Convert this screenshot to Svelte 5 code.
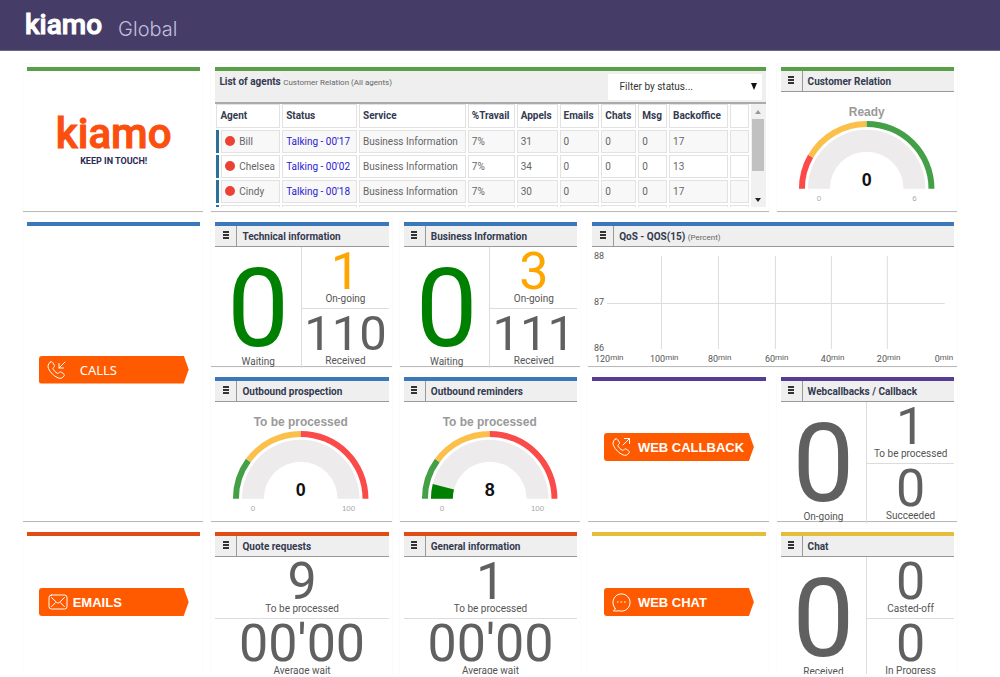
<script>
  const agents = [
    { name: 'Bill', status: "Talking - 00'17", calls: 31, back: 17 },
    { name: 'Chelsea', status: "Talking - 00'02", calls: 34, back: 13 },
    { name: 'Cindy', status: "Talking - 00'18", calls: 30, back: 17 }
  ];
  const columns = ['Status', 'Service', '%Travail', 'Appels', 'Emails', 'Chats', 'Msg', 'Backoffice', ''];

  const GREEN = '#43a047', YELLOW = '#fbc04a', RED = '#fb4a4a';
  const CX = 86, CY = 97;

  // Ring segment between two fractions of the half circle
  function arc(from, to, outer, inner) {
    const p = (f, r) => {
      const a = Math.PI * (1 - f);
      return `${(CX + r * Math.cos(a)).toFixed(2)} ${(CY - r * Math.sin(a)).toFixed(2)}`;
    };
    return `M${p(from, outer)}A${outer} ${outer} 0 0 1 ${p(to, outer)}L${p(to, inner)}A${inner} ${inner} 0 0 0 ${p(from, inner)}Z`;
  }

  const vlines = [69, 126, 183, 239, 295];
  const ticks = [[3, 120], [58, 100], [116, 80], [173, 60], [229, 40], [285, 20], [343, 0]];
</script>

{#snippet head(title, note = '')}
  <header class="head">
    <button class="menu" aria-label="Menu">
      <svg width="6" height="8" viewBox="0 0 6 8"><path d="M0 0h6v2H0zM0 3h6v2H0zM0 6h6v2H0z" fill="#333" /></svg>
    </button>
    <h2>{title}{#if note}&nbsp;<small>{note}</small>{/if}</h2>
  </header>
{/snippet}

{#snippet figure([value, label, tone = ''])}
  <div class="cell">
    <div class="num {tone}">{value}</div>
    <div class="label">{label}</div>
  </div>
{/snippet}

{#snippet split(title, color, main, top, bottom)}
  <section class="card {color}">
    {@render head(title)}
    <div class="split">
      <div class="main">
        <div class="big {main[2] ?? ''}">{main[0]}</div>
        <div class="label">{main[1]}</div>
      </div>
      <div class="side">
        {@render figure(top)}
        {@render figure(bottom)}
      </div>
    </div>
  </section>
{/snippet}

{#snippet stack(title, color, top, bottom)}
  <section class="card {color}">
    {@render head(title)}
    <div class="side">
      {@render figure(top)}
      {@render figure(bottom)}
    </div>
  </section>
{/snippet}

{#snippet gauge(title, color, caption, value, max, bands)}
  <section class="card {color}">
    {@render head(title)}
    <svg class="gauge" viewBox="0 0 174 116">
      <text x="86" y="24" class="caption">{caption}</text>
      {#each bands as [from, to, fill]}
        <path d={arc(from, to, 68, 62)} {fill} />
      {/each}
      <path d={arc(0, 1, 59, 37)} fill="#edebeb" />
      {#if value}
        <path d={arc(0, value / max, 59, 37)} fill="#008000" />
      {/if}
      <text x="86" y="94" class="value">{value}</text>
      <text x="38" y="109" class="limit">0</text>
      <text x="134" y="109" class="limit">{max}</text>
    </svg>
  </section>
{/snippet}

{#snippet phone(arrow)}
  <svg class="icon" width="20" height="20" viewBox="0 0 20 20">
    <path d="M4.2 2.2 C5 1.5 6 1.6 6.6 2.5 L8.2 5 C8.7 5.9 8.5 6.7 7.7 7.3 C6.8 8 6.7 8.5 7.2 9.3 C8.2 11 9.4 12.2 11 13.1 C11.8 13.6 12.4 13.4 13 12.6 C13.6 11.8 14.4 11.6 15.3 12.2 L17.6 13.8 C18.5 14.4 18.6 15.3 17.9 16.1 C16.4 18.2 14.4 18.9 12 17.9 C7.8 16 4.4 12.6 2.5 8.6 C1.4 6.2 2.1 3.9 4.2 2.2Z" />
    <path d={arrow} />
  </svg>
{/snippet}

<div class="page">
  <header class="top">
    <span class="brand">kiamo</span>
    <h1>Global</h1>
  </header>

  <main>
    <section class="card green">
      <div class="center logo">
        <div class="mark">kiamo</div>
        <div class="slogan">KEEP IN TOUCH!</div>
      </div>
    </section>

    <section class="card green wide3">
      <header class="listhead">
        <h2>List of agents <small>Customer Relation (All agents)</small></h2>
        <div class="filter">
          <select aria-label="Filter by status">
            <option>Filter by status...</option>
          </select>
          <svg width="6" height="7" viewBox="0 0 6 7"><path d="M0 0h6L3 7z" fill="#111" /></svg>
        </div>
      </header>
      <div class="scroller">
        <table>
          <colgroup>
            <col style="width: 3px" /><col style="width: 59px" /><col style="width: 75px" /><col style="width: 107px" />
            <col style="width: 47px" /><col style="width: 41px" /><col style="width: 40px" /><col style="width: 35px" />
            <col style="width: 29px" /><col style="width: 59px" /><col style="width: 19px" />
          </colgroup>
          <thead>
            <tr>
              <th colspan="2">Agent</th>
              {#each columns as c}<th>{c}</th>{/each}
            </tr>
          </thead>
          <tbody>
            {#each agents as a}
              <tr>
                <td class="flag"></td>
                <td><i class="dot"></i>{a.name}</td>
                <td class="talk">{a.status}</td>
                <td>Business Information</td>
                <td>7%</td>
                <td>{a.calls}</td>
                <td>0</td>
                <td>0</td>
                <td>0</td>
                <td>{a.back}</td>
                <td></td>
              </tr>
            {/each}
            <tr>
              <td class="flag"></td>
              <td></td>
              {#each columns as _}<td></td>{/each}
            </tr>
          </tbody>
        </table>
        <div class="bar" aria-hidden="true">
          <svg width="6" height="4" viewBox="0 0 6 4"><path d="M0 4h6L3 0z" fill="#999" /></svg>
          <div class="thumb"></div>
          <svg width="6" height="4" viewBox="0 0 6 4"><path d="M0 0h6L3 4z" fill="#222" /></svg>
        </div>
      </div>
    </section>

    {@render gauge('Customer Relation', 'green', 'Ready', 0, 6, [[0, 1 / 6, RED], [1 / 6, 0.5, YELLOW], [0.5, 1, GREEN]])}

    <section class="card blue tall">
      <div class="center">
        <div class="tag">
          {@render phone('M19 2 13 8M13 3.5V8H17.5')}
          <span class="thin">CALLS</span>
        </div>
      </div>
    </section>

    {@render split('Technical information', 'blue', [0, 'Waiting', 'ok'], [1, 'On-going', 'warn'], [110, 'Received', 'triple'])}
    {@render split('Business Information', 'blue', [0, 'Waiting', 'ok'], [3, 'On-going', 'warn'], [111, 'Received', 'triple'])}

    <section class="card blue wide2">
      {@render head('QoS - QOS(15)', '(Percent)')}
      <svg class="chart" viewBox="0 0 362 119">
        {#each vlines as x}<path d="M{x}.5 9V102" />{/each}
        <path d="M15 56.5H353" />
        <text x="2" y="12">88</text>
        <text x="2" y="58">87</text>
        <text x="2" y="104">86</text>
        {#each ticks as [x, n]}
          <text {x} y="115">{n}<tspan dy="-2">min</tspan></text>
        {/each}
      </svg>
    </section>

    {@render gauge('Outbound prospection', 'blue', 'To be processed', 0, 100, [[0, 0.2, GREEN], [0.2, 0.5, YELLOW], [0.5, 1, RED]])}
    {@render gauge('Outbound reminders', 'blue', 'To be processed', 8, 100, [[0, 0.2, GREEN], [0.2, 0.5, YELLOW], [0.5, 1, RED]])}

    <section class="card purple">
      <div class="center">
        <div class="tag">
          {@render phone('M12 8 18.5 1.5M13.5 1.5H18.5V6.5')}
          <span>WEB CALLBACK</span>
        </div>
      </div>
    </section>

    {@render split('Webcallbacks / Callback', 'purple', [0, 'On-going'], [1, 'To be processed'], [0, 'Succeeded'])}

    <section class="card orange">
      <div class="center">
        <div class="tag mail">
          <svg class="icon" width="20" height="16" viewBox="0 0 20 16">
            <rect x="1" y="1" width="18" height="14" rx="2.5" />
            <path d="M3.5 3.5 8.8 8.6Q10 9.6 11.2 8.6L16.5 3.5M3.5 12.7 7.6 8.6M16.5 12.7 12.4 8.6" />
          </svg>
          <span>EMAILS</span>
        </div>
      </div>
    </section>

    {@render stack('Quote requests', 'orange', [9, 'To be processed'], ["00'00", 'Average wait'])}
    {@render stack('General information', 'orange', [1, 'To be processed'], ["00'00", 'Average wait'])}

    <section class="card yellow">
      <div class="center">
        <div class="tag">
          <svg class="icon" width="20" height="20" viewBox="0 0 20 20">
            <path d="M4.2 16.4A8.6 8.6 0 1 1 8.2 18.8Q5 19.2 2.4 18.8Q3.9 18 4.2 16.4Z" />
            <path d="M6.4 10h.8M9.9 10h.8M13.4 10h.8" />
          </svg>
          <span>WEB CHAT</span>
        </div>
      </div>
    </section>

    {@render split('Chat', 'yellow', [0, 'Received'], [0, 'Casted-off'], [0, 'In Progress'])}
  </main>
</div>

<style>
  :global(body) {
    margin: 0;
    background: #fff;
  }
  .page {
    height: calc(100vh - 3px);
    overflow: hidden;
    font-family: Roboto, sans-serif;
    font-size: 10px;
    color: #555;
  }
  h1, h2 {
    margin: 0;
  }
  .top {
    display: flex;
    align-items: center;
    gap: 16px;
    height: 51px;
    padding-left: 25px;
    background: #453d68;
    border-bottom: 1px solid #6d678a;
    box-sizing: border-box;
    color: #fff;
  }
  .brand, .mark {
    font-weight: 500;
  }
  .brand {
    font-size: 28px;
    line-height: 50px;
    -webkit-text-stroke: 1px #fff;
  }
  h1 {
    padding-top: 7px;
    font-family: Inter, sans-serif;
    font-size: 20px;
    font-weight: 300;
    line-height: 24px;
    color: #c3bddd;
  }
  main {
    display: grid;
    grid-template-columns: repeat(5, minmax(0, 1fr));
    grid-auto-rows: 148px;
    gap: 7px 8px;
    padding: 13px 43px 0 23px;
  }
  .card {
    display: flex;
    flex-direction: column;
    box-sizing: border-box;
    min-width: 0;
    padding: 3px 3px 0 4px;
    border-bottom: 1px solid #b9b9b9;
    background: #fff;
    box-shadow: 0 0 1px #e4e4e4;
  }
  .card::before {
    content: '';
    flex: none;
    height: 4px;
    background: var(--line);
  }
  .green { --line: #5a9e48; }
  .blue { --line: #3a78b9; }
  .purple { --line: #553d96; }
  .orange { --line: #df4d14; }
  .yellow { --line: #e5bd3c; }
  .wide2 { grid-column: span 2; }
  .wide3 { grid-column: span 3; }
  .tall { grid-row: span 2; }

  .head {
    display: flex;
    flex: none;
    height: 20px;
    border-bottom: 1px solid #999;
    background: #efefef;
  }
  .menu {
    display: flex;
    align-items: center;
    justify-content: center;
    width: 22px;
    padding: 0 0 2px;
    border: 0;
    border-right: 1px solid #999;
    background: none;
  }
  h2 {
    padding-left: 5px;
    font-size: 10px;
    font-weight: 700;
    line-height: 21px;
    white-space: nowrap;
    color: #343a50;
  }
  small {
    font-size: 8px;
    font-weight: 400;
    color: #666;
  }

  .split {
    display: grid;
    grid-template-columns: 1fr 1fr;
    flex: 1;
  }
  .main, .cell {
    text-align: center;
  }
  .main {
    padding-top: 15px;
    border-right: 1px solid #dcdcdc;
  }
  .big {
    font-size: 110px;
    line-height: 94px;
    color: #606060;
  }
  .num {
    font-size: 52px;
    line-height: 43px;
    color: #606060;
  }
  .triple { font-size: 49px; }
  .ok { color: #008000; }
  .warn { color: #ffa500; }
  .label {
    line-height: 12px;
    white-space: nowrap;
  }
  .cell {
    height: 58px;
    padding-top: 3px;
  }
  .cell + .cell {
    height: 53px;
    padding-top: 3px;
    border-top: 1px solid #dcdcdc;
  }

  .gauge, .chart {
    display: block;
    width: 100%;
  }
  .gauge text {
    text-anchor: middle;
    font-family: "Liberation Sans", sans-serif;
  }
  .gauge .caption {
    font-size: 12px;
    font-weight: 700;
    fill: #999;
  }
  .gauge .value {
    font-size: 18px;
    font-weight: 700;
    fill: #111;
  }
  .gauge .limit {
    font-size: 8px;
    fill: #aaa;
  }
  .chart path {
    stroke: #dcdcdc;
  }
  .chart text {
    font-size: 9px;
    fill: #555;
  }
  .chart tspan {
    font-size: 8px;
  }

  .listhead {
    display: flex;
    flex: none;
    justify-content: space-between;
    height: 31px;
    border-bottom: 2px solid #aaa;
    background: #efefef;
  }
  .listhead h2 {
    padding-left: 4px;
  }
  .filter {
    display: flex;
    align-items: center;
    align-self: center;
    width: 154px;
    height: 26px;
    margin-right: 4px;
    padding-right: 5px;
    box-sizing: border-box;
    background: #fff;
  }
  select {
    flex: 1;
    height: 26px;
    padding: 0 0 0 12px;
    border: 0;
    appearance: none;
    background: none;
    font: 10px Roboto, sans-serif;
    color: #333;
  }
  .scroller {
    display: flex;
    flex: none;
    height: 103px;
    overflow: hidden;
  }
  table {
    flex: 1;
    align-self: flex-start;
    min-width: 0;
    table-layout: fixed;
    border-collapse: separate;
    border-spacing: 2px;
    margin: -2px 0 0 -1px;
    color: #666;
  }
  th, td {
    box-sizing: border-box;
    height: 23px;
    padding: 0 0 0 3px;
    border: 1px solid #e2e2e2;
    text-align: left;
    white-space: nowrap;
    line-height: 20px;
  }
  th {
    height: 24px;
    color: #343a50;
  }
  tbody tr:nth-child(odd) td {
    background: #f8f8f8;
  }
  tbody tr td.flag {
    padding: 0;
    border: 0;
    background: #27719b;
  }
  td.talk {
    color: #2a20d0;
  }
  .dot {
    display: inline-block;
    width: 10px;
    height: 10px;
    margin-right: 4px;
    border-radius: 50%;
    background: #ea4335;
    vertical-align: -1px;
  }
  .bar {
    display: flex;
    flex: none;
    flex-direction: column;
    align-items: center;
    width: 15px;
    padding: 6px 0 5px;
    box-sizing: border-box;
    background: #f1f1f1;
  }
  .thumb {
    width: 12px;
    height: 52px;
    margin: 5px 0 auto;
    background: #c1c1c1;
  }

  .center {
    display: flex;
    flex: 1;
    flex-direction: column;
    align-items: center;
    justify-content: center;
    padding-bottom: 8px;
  }
  .mark {
    font-size: 42px;
    line-height: 42px;
    color: #fa4f0e;
    -webkit-text-stroke: 1px #fa4f0e;
  }
  .logo {
    padding-bottom: 2px;
  }
  .slogan {
    font-size: 9px;
    font-weight: 700;
    line-height: 12px;
    color: #2d2a55;
  }
  .tag {
    display: flex;
    align-items: center;
    gap: 7px;
    width: 150px;
    height: 28px;
    padding-left: 7px;
    box-sizing: border-box;
    border-radius: 3px 0 0 3px;
    clip-path: polygon(0 0, 145px 0, 100% 50%, 145px 100%, 0 100%);
    background: #ff5a00;
    font: 700 13px "Liberation Sans", sans-serif;
    white-space: nowrap;
    color: #fff;
  }
  .mail {
    gap: 5px;
    padding-left: 9px;
  }
  .thin {
    padding-left: 7px;
    font-family: "Noto Sans", sans-serif;
    font-weight: 400;
  }
  .icon {
    fill: none;
    stroke: #fff;
    stroke-linecap: round;
    stroke-linejoin: round;
  }
</style>
